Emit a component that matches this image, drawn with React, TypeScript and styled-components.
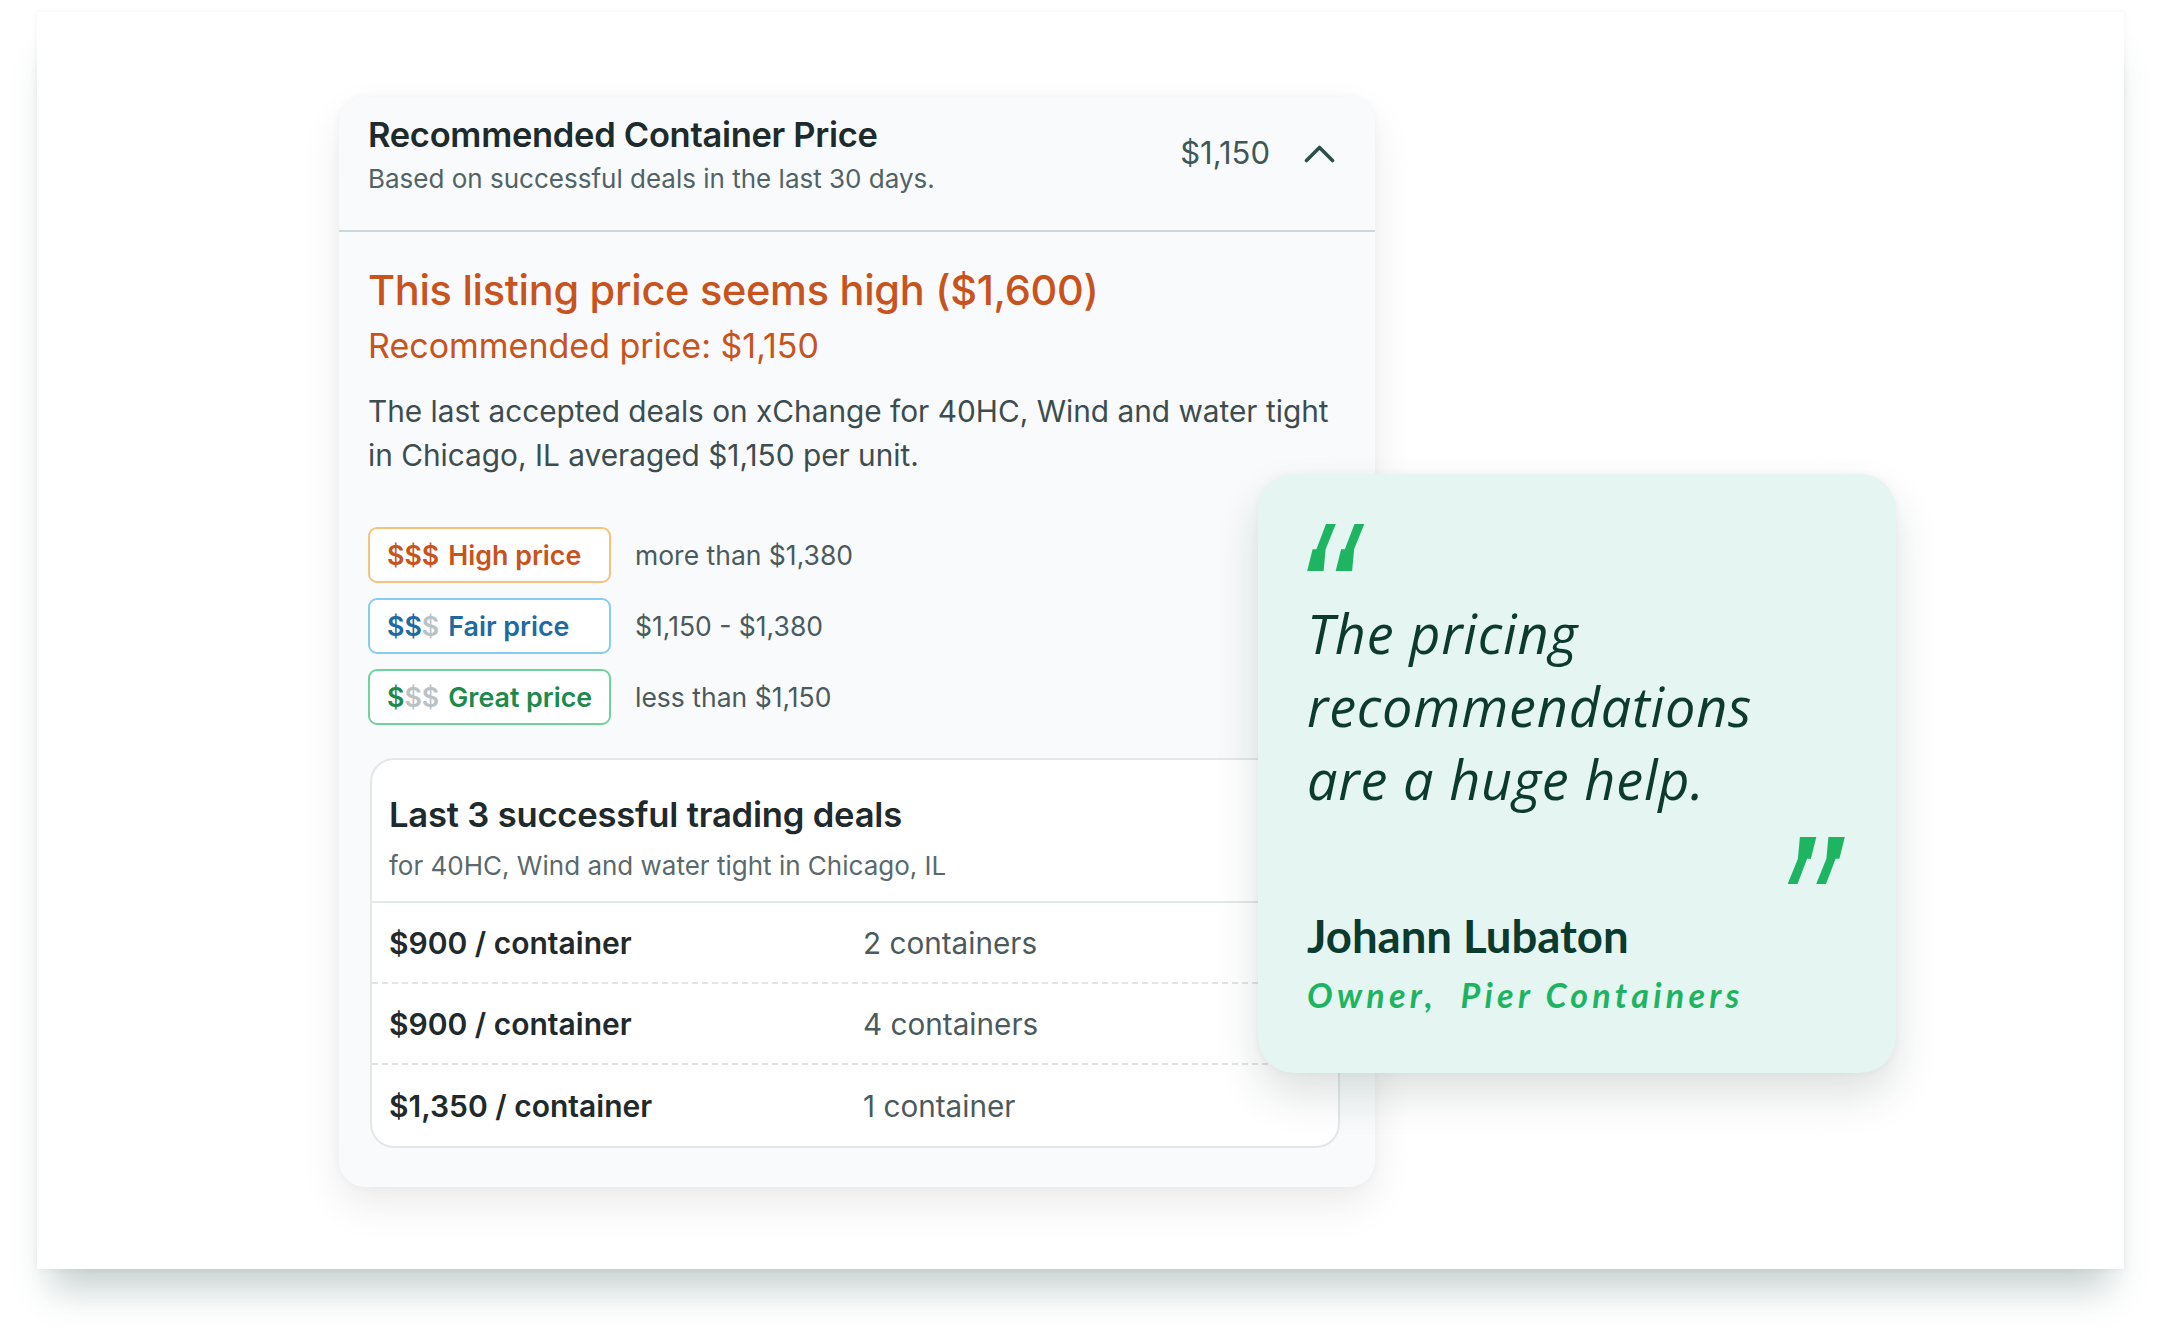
import React from "react";
import styled, { createGlobalStyle } from "styled-components";

const GlobalStyle = createGlobalStyle`
  html, body { margin: 0; padding: 0; background: #ffffff; }
  body { font-family: Inter, "Noto Sans", Arial, sans-serif; -webkit-font-smoothing: antialiased; }
  * { box-sizing: border-box; }
`;

const Page = styled.div`
  width: 2162px;
  height: 1332px;
  padding: 12px 38px 0 37px;
  background: #ffffff;
`;

const Frame = styled.div`
  position: relative;
  width: 2087px;
  height: 1257px;
  background: #ffffff;
  padding: 85px 0 0 302px;
  box-shadow: 0 0 6px rgba(60, 90, 90, 0.08), 0 34px 34px -14px rgba(50, 85, 85, 0.28);
`;

const Card = styled.section`
  width: 1036px;
  height: 1090px;
  background: #f8fafb;
  border-radius: 26px;
  box-shadow: 0 0 8px rgba(0, 0, 0, 0.04), 0 18px 40px rgba(0, 0, 0, 0.08);
  display: flex;
  flex-direction: column;
  overflow: hidden;
`;

const Header = styled.header`
  height: 135px;
  padding: 18px 40px 0 29px;
  border-bottom: 2px solid #cdd6da;
  display: flex;
  justify-content: space-between;
  align-items: flex-start;
`;

const HeaderText = styled.div`
  display: flex;
  flex-direction: column;
`;

const Title = styled.h1`
  margin: 0;
  font-size: 34.5px;
  line-height: 40px;
  font-weight: 600;
  color: #1d2b2c;
  letter-spacing: -0.3px;
`;

const Subtitle = styled.p`
  margin: 7px 0 0;
  font-size: 26px;
  line-height: 34px;
  font-weight: 400;
  color: #516365;
`;

const HeaderRight = styled.div`
  display: flex;
  align-items: center;
  gap: 34px;
  margin-top: 18px;
`;

const HeaderPrice = styled.span`
  font-size: 31px;
  line-height: 40px;
  color: #3e5856;
`;

const Body = styled.div`
  padding: 34px 35px 0 29px;
  display: flex;
  flex-direction: column;
`;

const Alert = styled.h2`
  margin: 0;
  font-size: 41.5px;
  line-height: 48px;
  font-weight: 500;
  color: #c8531d;
  letter-spacing: -0.3px;
`;

const AlertSub = styled.p`
  margin: 12px 0 0;
  font-size: 34px;
  line-height: 40px;
  font-weight: 400;
  color: #c8531d;
`;

const Paragraph = styled.p`
  margin: 23px 0 0;
  font-size: 29.8px;
  line-height: 44px;
  color: #3d4d4f;
`;

const Legend = styled.div`
  margin-top: 50px;
  display: flex;
  flex-direction: column;
  gap: 15px;
`;

const LegendRow = styled.div`
  display: flex;
  align-items: center;
  gap: 24px;
`;

const Badge = styled.div<{ $border: string; $color: string }>`
  width: 243px;
  height: 56px;
  border: 2px solid ${(p) => p.$border};
  border-radius: 9px;
  background: #ffffff;
  padding-left: 17px;
  display: flex;
  align-items: center;
  gap: 9px;
  font-size: 26.8px;
  font-weight: 600;
  color: ${(p) => p.$color};
`;

const Dollar = styled.span<{ $muted?: boolean }>`
  color: ${(p) => (p.$muted ? "#b9c3c6" : "inherit")};
`;

const LegendLabel = styled.span`
  font-size: 26.5px;
  color: #4b5a5c;
`;

const Deals = styled.div`
  margin: 33px 0 0 2px;
  background: #ffffff;
  border: 2px solid #e2e7e9;
  border-radius: 24px;
  display: flex;
  flex-direction: column;
`;

const DealsHead = styled.div`
  padding: 34px 17px 18px;
  border-bottom: 2px solid #e2e7e9;
`;

const DealsTitle = styled.h3`
  margin: 0;
  font-size: 34.6px;
  line-height: 40px;
  font-weight: 600;
  color: #1f2a2c;
  letter-spacing: -0.2px;
`;

const DealsSub = styled.p`
  margin: 15px 0 0;
  font-size: 26px;
  line-height: 34px;
  color: #5a6a6c;
`;

const DealRow = styled.div<{ $last?: boolean }>`
  height: 81px;
  padding: 0 17px;
  display: grid;
  grid-template-columns: 474px 1fr;
  align-items: center;
  border-bottom: ${(p) => (p.$last ? "none" : "2px dashed #dfe4e6")};
`;

const DealPrice = styled.span`
  font-size: 30px;
  font-weight: 600;
  color: #1f2a2c;
`;

const DealCount = styled.span`
  font-size: 29.7px;
  color: #4b5a5c;
`;

const Testimonial = styled.aside`
  position: absolute;
  left: 1221px;
  top: 462px;
  width: 638px;
  height: 599px;
  background: #e4f5f2;
  border-radius: 36px;
  box-shadow: 0 0 8px rgba(0, 0, 0, 0.04), 0 22px 44px rgba(20, 50, 45, 0.14);
  padding: 50px 51px 0 49px;
  display: flex;
  flex-direction: column;
  font-family: Lato, "Open Sans", sans-serif;
`;

const QuoteText = styled.p`
  margin: 26px 0 0;
  font-family: "Open Sans", Lato, sans-serif;
  font-size: 54px;
  line-height: 73px;
  letter-spacing: 0.8px;
  font-style: italic;
  font-weight: 400;
  color: #0c3a2f;
  white-space: nowrap;
`;

const CloseQuote = styled.div`
  margin-top: 21px;
  display: flex;
  justify-content: flex-end;
`;

const Name = styled.div`
  margin-top: 28px;
  font-size: 45.5px;
  line-height: 48px;
  font-weight: 700;
  color: #0b3a2e;
`;

const Role = styled.div`
  margin-top: 15px;
  font-size: 34px;
  line-height: 40px;
  font-weight: 700;
  font-style: italic;
  letter-spacing: 4.3px;
  color: #1db461;
  white-space: pre;
`;

const QuoteMark = ({ flip }: { flip?: boolean }) => (
  <svg
    width="58"
    height="47"
    viewBox="0 0 58 47"
    style={flip ? { transform: "rotate(180deg)" } : undefined}
  >
    <g fill="#1db462">
      <polygon points="19,0 28.8,0 18.6,25.3 16.6,47 0.2,47 5.6,25.3 9.4,25.3" />
      <polygon points="47.5,0 57.3,0 47.1,25.3 45.1,47 28.7,47 34.1,25.3 37.9,25.3" />
    </g>
  </svg>
);

const Chevron = () => (
  <svg width="31" height="19" viewBox="0 0 31 19">
    <polyline
      points="2.5,16.5 15.5,3.5 28.5,16.5"
      fill="none"
      stroke="#2f4f4a"
      strokeWidth="3.6"
      strokeLinecap="round"
      strokeLinejoin="round"
    />
  </svg>
);

const deals = [
  { price: "$900 / container", count: "2 containers" },
  { price: "$900 / container", count: "4 containers" },
  { price: "$1,350 / container", count: "1 container" },
];

export default function App() {
  return (
    <>
      <GlobalStyle />
      <Page>
        <Frame>
          <Card>
            <Header>
              <HeaderText>
                <Title>Recommended Container Price</Title>
                <Subtitle>Based on successful deals in the last 30 days.</Subtitle>
              </HeaderText>
              <HeaderRight>
                <HeaderPrice>$1,150</HeaderPrice>
                <Chevron />
              </HeaderRight>
            </Header>
            <Body>
              <Alert>This listing price seems high ($1,600)</Alert>
              <AlertSub>Recommended price: $1,150</AlertSub>
              <Paragraph>
                The last accepted deals on xChange for 40HC, Wind and water tight
                <br />
                in Chicago, IL averaged $1,150 per unit.
              </Paragraph>
              <Legend>
                <LegendRow>
                  <Badge $border="#f6c27c" $color="#c7531d">
                    <span>$$$</span>
                    <span>High price</span>
                  </Badge>
                  <LegendLabel>more than $1,380</LegendLabel>
                </LegendRow>
                <LegendRow>
                  <Badge $border="#86cdf1" $color="#1f6aa0">
                    <span>
                      $$<Dollar $muted>$</Dollar>
                    </span>
                    <span>Fair price</span>
                  </Badge>
                  <LegendLabel>$1,150 - $1,380</LegendLabel>
                </LegendRow>
                <LegendRow>
                  <Badge $border="#6fd39b" $color="#1d8a4c">
                    <span>
                      $<Dollar $muted>$$</Dollar>
                    </span>
                    <span>Great price</span>
                  </Badge>
                  <LegendLabel>less than $1,150</LegendLabel>
                </LegendRow>
              </Legend>
              <Deals>
                <DealsHead>
                  <DealsTitle>Last 3 successful trading deals</DealsTitle>
                  <DealsSub>for 40HC, Wind and water tight in Chicago, IL</DealsSub>
                </DealsHead>
                {deals.map((d, i) => (
                  <DealRow key={i} $last={i === deals.length - 1}>
                    <DealPrice>{d.price}</DealPrice>
                    <DealCount>{d.count}</DealCount>
                  </DealRow>
                ))}
              </Deals>
            </Body>
          </Card>
          <Testimonial>
            <QuoteMark />
            <QuoteText>
              The pricing
              <br />
              recommendations
              <br />
              are a huge help.
            </QuoteText>
            <CloseQuote>
              <QuoteMark flip />
            </CloseQuote>
            <Name>Johann Lubaton</Name>
            <Role>{"Owner,  Pier Containers"}</Role>
          </Testimonial>
        </Frame>
      </Page>
    </>
  );
}
